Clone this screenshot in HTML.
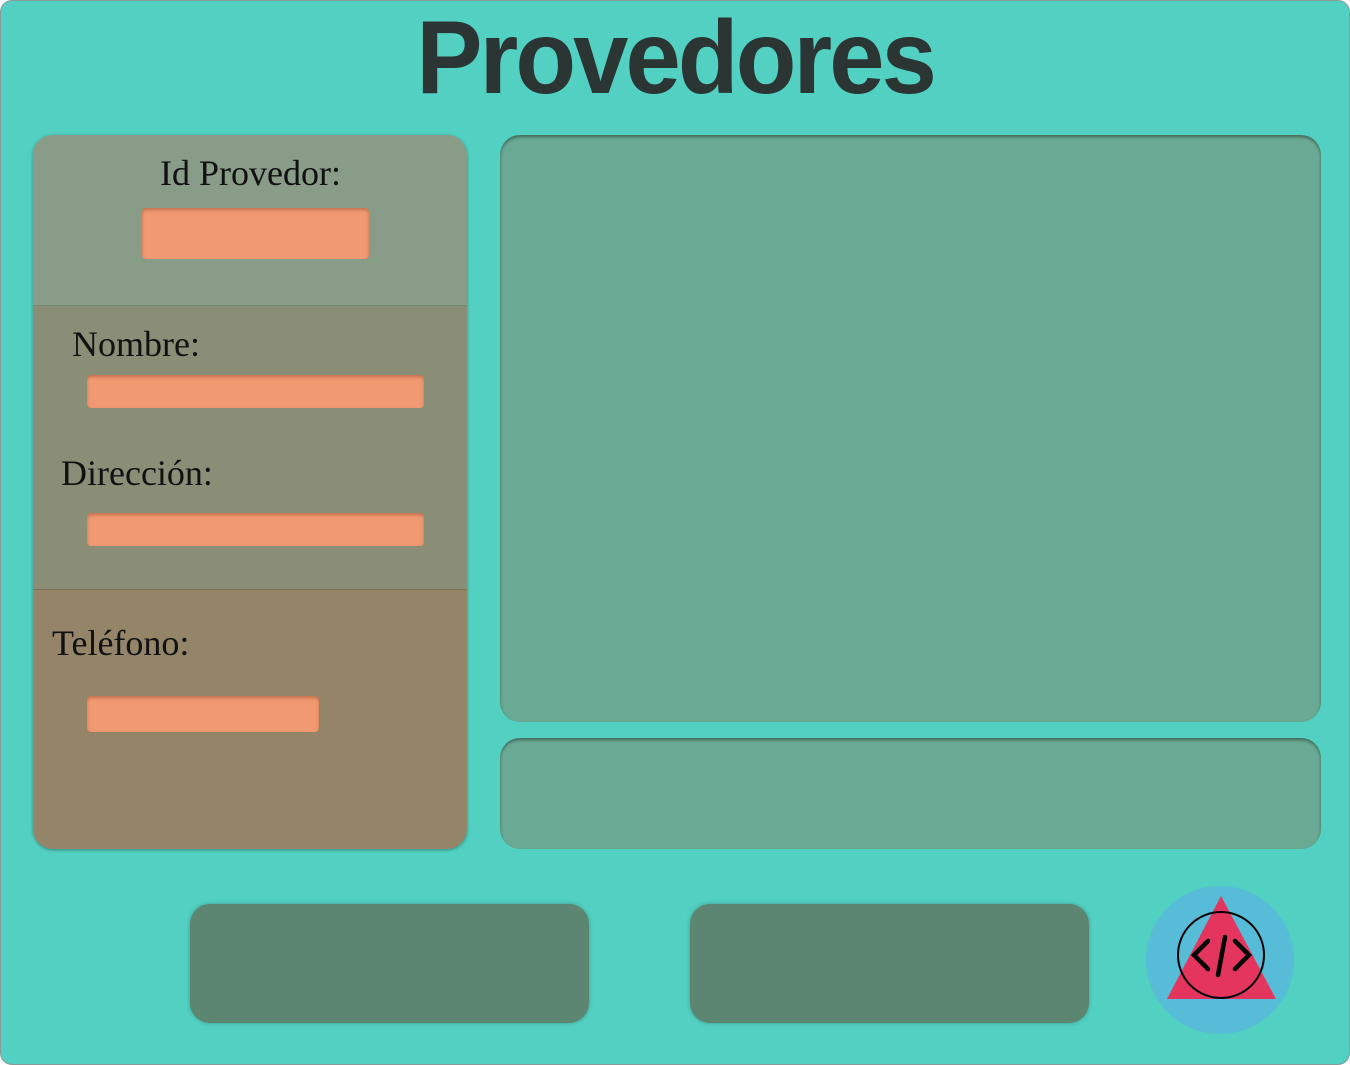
<!DOCTYPE html><html><head><style>
body{margin:0;width:1350px;height:1065px;background:#fff;overflow:hidden;font-family:"Liberation Serif",serif}
.o{position:absolute;left:0;top:0;width:1348px;height:1063px;background:#52d0c1;border:1px solid #8a9a96;border-radius:12px}
.t{position:absolute;left:0;width:1350px;top:-1px;text-align:center;font:bold 104px "Liberation Sans",sans-serif;color:#2b3534;letter-spacing:-3px}
.t span{display:inline-block;transform:scaleX(.955)}
.p{position:absolute;left:33px;top:135px;width:434px;height:714px;border-radius:20px;overflow:hidden;box-shadow:0 1px 3px rgba(0,0,0,.35)}
.s{position:absolute;left:0;width:434px}
.l{position:absolute;font-size:36px;color:#111}
.i{position:absolute;background:#f19a72;border-radius:4px;box-shadow:inset 0 2px 3px rgba(150,70,40,.5)}
.b{position:absolute;background:#6aaa94;border-radius:20px;box-shadow:inset 0 2px 3px rgba(0,0,0,.4)}
.btn{position:absolute;top:904px;width:399px;height:119px;background:#5c8672;border-radius:20px;box-shadow:0 0 4px rgba(0,0,0,.25)}
</style></head><body>
<div class="o"></div>
<div class="t"><span>Provedores</span></div>
<div class="p">
<div class="s" style="top:0;height:170px;background:#889c88"></div>
<div class="s" style="top:170px;height:284px;background:#8a8e76;border-top:1px solid #7a8a70"></div>
<div class="s" style="top:454px;height:260px;background:#948468;border-top:1px solid #7f7258"></div>
<div class="l" style="left:127px;top:17px">Id Provedor:</div>
<div class="i" style="left:109px;top:73px;width:227px;height:51px"></div>
<div class="l" style="left:39px;top:188px">Nombre:</div>
<div class="i" style="left:54px;top:240px;width:337px;height:33px"></div>
<div class="l" style="left:28px;top:317px">Dirección:</div>
<div class="i" style="left:54px;top:378px;width:337px;height:33px"></div>
<div class="l" style="left:19px;top:487px">Teléfono:</div>
<div class="i" style="left:54px;top:561px;width:232px;height:36px"></div>
</div>
<div class="b" style="left:500px;top:135px;width:821px;height:587px"></div>
<div class="b" style="left:500px;top:738px;width:821px;height:111px"></div>
<div class="btn" style="left:190px"></div>
<div class="btn" style="left:690px"></div>
<svg style="position:absolute;left:1140px;top:880px" width="160" height="160">
<circle cx="80" cy="80" r="74" fill="#57bcd8"/>
<polygon points="81,16 136,119 27,119" fill="#e3355e"/>
<circle cx="81" cy="75" r="43" fill="none" stroke="#000" stroke-width="2"/>
<path d="M68,61 L54,75 L68,89 M95,61 L109,75 L95,89 M85,57 L78,95" fill="none" stroke="#000" stroke-width="4.5" stroke-linecap="round"/>
</svg>
</body></html>
